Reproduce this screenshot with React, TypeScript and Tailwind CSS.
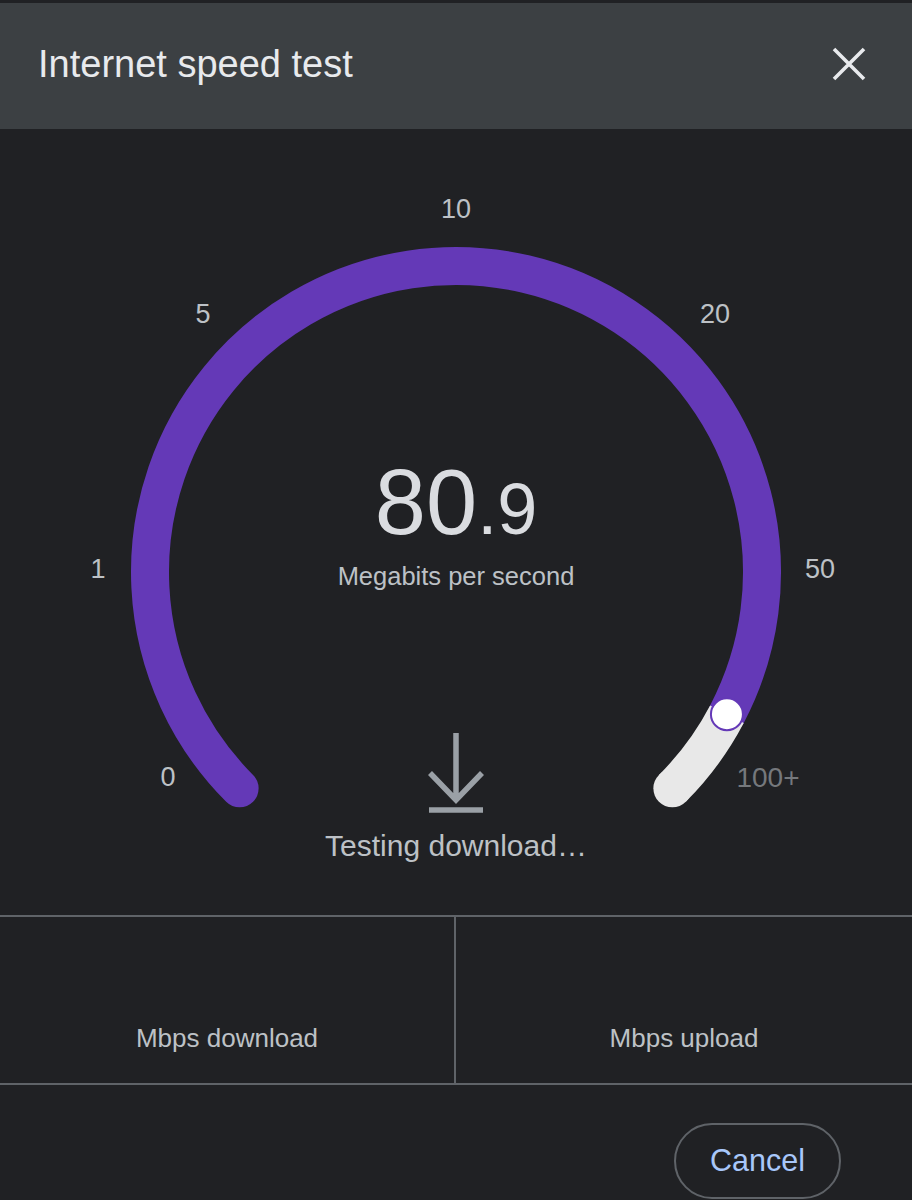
import React from "react";

const PURPLE = "#6439b7";

function Gauge() {
  const cx = 456;
  const cy = 443;
  const r = 306;
  const pt = (deg: number) => {
    const a = (deg * Math.PI) / 180;
    return [cx + r * Math.cos(a), cy - r * Math.sin(a)];
  };
  const [sx, sy] = pt(225);
  const [kx, ky] = pt(-27.7);
  const [ex, ey] = pt(-45);
  const labels: { t: string; x: number; y: number; c: string; s: number }[] = [
    { t: "10", x: 456, y: 80, c: "#bdc1c6", s: 27 },
    { t: "5", x: 203, y: 185, c: "#bdc1c6", s: 27 },
    { t: "20", x: 715, y: 185, c: "#bdc1c6", s: 27 },
    { t: "1", x: 98, y: 440, c: "#bdc1c6", s: 27 },
    { t: "50", x: 820, y: 440, c: "#bdc1c6", s: 27 },
    { t: "0", x: 168, y: 648, c: "#bdc1c6", s: 27 },
    { t: "100+", x: 768, y: 648, c: "#75787c", s: 28 },
  ];
  return (
    <svg className="absolute inset-0" width="912" height="787" viewBox="0 0 912 787">
      <path
        d={`M ${sx} ${sy} A ${r} ${r} 0 1 1 ${kx} ${ky}`}
        fill="none"
        stroke={PURPLE}
        strokeWidth="38"
        strokeLinecap="round"
      />
      <path
        d={`M ${kx} ${ky} A ${r} ${r} 0 0 1 ${ex} ${ey}`}
        fill="none"
        stroke="#e8e8e8"
        strokeWidth="38"
        strokeLinecap="butt"
      />
      <circle cx={ex} cy={ey} r="19" fill="#e8e8e8" />
      <circle cx={kx} cy={ky} r="16" fill="#ffffff" stroke={PURPLE} strokeWidth="2" />
      {labels.map((l) => (
        <text
          key={l.t}
          x={l.x}
          y={l.y}
          fill={l.c}
          fontSize={l.s}
          textAnchor="middle"
          dominantBaseline="central"
          fontFamily="'Liberation Sans', Arial, sans-serif"
        >
          {l.t}
        </text>
      ))}
    </svg>
  );
}

export default function App() {
  return (
    <div className="w-[912px] h-[1200px] overflow-hidden bg-[#202124] flex flex-col font-['Liberation_Sans',Arial,sans-serif]">
      <div className="h-[129px] border-t-[3px] border-[#202124] bg-[#3c4043] flex items-center justify-between pl-[38px] pr-[46px] pb-[5px]">
        <div className="text-[38px] leading-[46px] text-[#e8eaed]">Internet speed test</div>
        <svg width="34" height="34" viewBox="0 0 34 34">
          <path d="M2 2 L32 32 M32 2 L2 32" stroke="#e8eaed" strokeWidth="3.6" strokeLinecap="butt" />
        </svg>
      </div>

      <div className="relative h-[786px] flex flex-col items-center">
        <Gauge />
        <div className="relative mt-[327px] text-[92px] leading-none text-[#dadce0]">
          80<span className="text-[72px] leading-none">.9</span>
        </div>
        <div className="relative mt-[13px] text-[25.5px] leading-[30px] text-[#bdc1c6]">Megabits per second</div>
        <svg className="relative mt-[142px]" width="56" height="80" viewBox="0 0 56 80">
          <path d="M28 0 L28 67 M2 40 L28 67 L54 40" fill="none" stroke="#9aa0a6" strokeWidth="5.5" />
          <path d="M1 77 L55 77" stroke="#9aa0a6" strokeWidth="5.5" />
        </svg>
        <div className="relative mt-[15px] text-[30px] leading-[36px] text-[#bdc1c6]">Testing download…</div>
      </div>

      <div className="h-[170px] border-y-2 border-[#5f6368] grid grid-cols-2">
        <div className="border-r-2 border-[#5f6368] flex flex-col justify-end items-center pb-[30px]">
          <div className="text-[26px] leading-[30px] text-[#bdc1c6]">Mbps download</div>
        </div>
        <div className="flex flex-col justify-end items-center pb-[30px]">
          <div className="text-[26px] leading-[30px] text-[#bdc1c6]">Mbps upload</div>
        </div>
      </div>

      <div className="flex justify-end pr-[71px] pt-[38px]">
        <button className="w-[167px] h-[76px] rounded-full border-2 border-[#5f6368] text-[30.5px] text-[#a8c7fa] flex items-center justify-center">
          Cancel
        </button>
      </div>
    </div>
  );
}
